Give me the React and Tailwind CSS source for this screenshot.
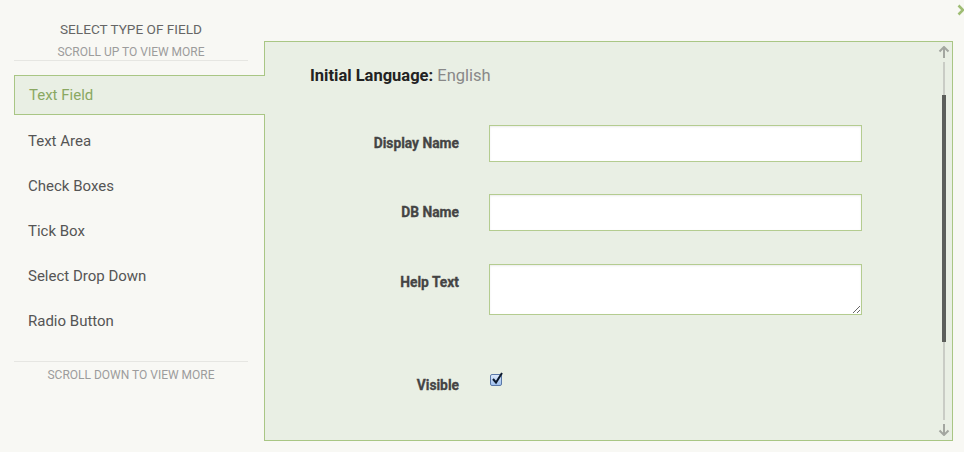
import React from "react";

const items = ["Text Area", "Check Boxes", "Tick Box", "Select Drop Down", "Radio Button"];

function Arrow({ down }) {
  return (
    <svg width="12" height="12" viewBox="0 0 12 12" className={down ? "rotate-180" : ""}>
      <path d="M1.5 5.5 L6 1 L10.5 5.5 M6 1 V12" fill="none" stroke="#a3a6a0" strokeWidth="2" />
    </svg>
  );
}

const labelCls =
  "w-[194px] text-right text-[13.8px] leading-[16px] font-bold text-[#444] [-webkit-text-stroke:0.3px_#444]";

export default function App() {
  return (
    <div
      className="relative flex w-[964px] h-[452px] bg-[#f8f8f4] overflow-hidden"
      style={{ fontFamily: "Roboto, 'Liberation Sans', sans-serif" }}
    >
      <svg className="absolute left-[957px] top-[4px]" width="8" height="12" viewBox="0 0 8 12">
        <path d="M1.5 1.5 L6 6 L1.5 10.5" fill="none" stroke="#9fbd74" strokeWidth="2.6" />
      </svg>

      {/* Left column */}
      <div className="ml-[14px] w-[250px] flex flex-col">
        <div className="w-[234px] pt-[21px] text-center text-[13.6px] leading-[16px] text-[#666] uppercase">
          Select type of field
        </div>
        <div className="w-[234px] mt-[8px] text-center text-[12px] leading-[14px] text-[#9c9c9c] uppercase">
          Scroll up to view more
        </div>
        <div className="w-[234px] h-px mt-[1px] bg-[#e6e6e2]" />
        <div className="relative z-10 mt-[14px] w-[251px] h-[40px] flex items-center pl-[14px] bg-[#e9efe4] border-y border-l border-[#a9c684] text-[15px] text-[#8aa862]">
          Text Field
        </div>
        <div className="mt-[4px] flex flex-col">
          {items.map((t) => (
            <div key={t} className="h-[45px] flex items-center pl-[14px] text-[15px] text-[#555]">
              {t}
            </div>
          ))}
        </div>
        <div className="w-[234px] h-px mt-[17px] bg-[#e6e6e2]" />
        <div className="w-[234px] mt-[6px] text-center text-[12px] leading-[14px] text-[#9c9c9c] uppercase">
          Scroll down to view more
        </div>
      </div>

      {/* Panel */}
      <div className="mt-[41px] w-[689px] h-[400px] bg-[#e9efe4] border border-[#a9c684] flex">
        <div className="flex-1 flex flex-col">
          <div className="pl-[45px] pt-[24px] text-[16.5px] leading-[20px]">
            <span className="font-bold text-[#222]">Initial Language:</span>{" "}
            <span className="text-[#888]">English</span>
          </div>

          <div className="mt-[39px] flex">
            <div className={labelCls + " pt-[10px]"}>Display Name</div>
            <input className="ml-[30px] w-[373px] h-[37px] bg-white border border-[#b4cc90] shadow-[inset_0_1px_2px_rgba(0,0,0,0.08)] outline-none" />
          </div>

          <div className="mt-[32px] flex">
            <div className={labelCls + " pt-[10px]"}>DB Name</div>
            <input className="ml-[30px] w-[373px] h-[37px] bg-white border border-[#b4cc90] shadow-[inset_0_1px_2px_rgba(0,0,0,0.08)] outline-none" />
          </div>

          <div className="mt-[33px] flex">
            <div className={labelCls + " pt-[10px]"}>Help Text</div>
            <textarea className="ml-[30px] w-[373px] h-[51px] bg-white border border-[#b4cc90] shadow-[inset_0_1px_2px_rgba(0,0,0,0.08)] outline-none resize-y" />
          </div>

          <div className="mt-[57px] flex">
            <div className={labelCls + " pt-[5px]"}>Visible</div>
            <div className="ml-[31px] relative w-[12px] h-[13px]">
              <div className="absolute left-0 top-[2px] w-[12px] h-[12px] rounded-[2px] border border-[#5a78a8] bg-gradient-to-b from-[#dbe8fb] to-[#9fc0ee]" />
              <svg className="absolute left-[1px] top-0" width="13" height="13" viewBox="0 0 13 13">
                <path d="M2 7 L5 10.5 L11 1" fill="none" stroke="#0d1a2e" strokeWidth="2" />
              </svg>
            </div>
          </div>
        </div>

        {/* Scrollbar */}
        <div className="w-[17px] flex flex-col items-center pt-[4px]">
          <Arrow />
          <div className="relative mt-[4px] w-[2px] h-[358px] bg-[#c9ccc5]">
            <div className="absolute left-[-1px] top-[33px] w-[4px] h-[247px] bg-[#5c5f5b]" />
          </div>
          <div className="mt-[4px]">
            <Arrow down />
          </div>
        </div>
      </div>
    </div>
  );
}
